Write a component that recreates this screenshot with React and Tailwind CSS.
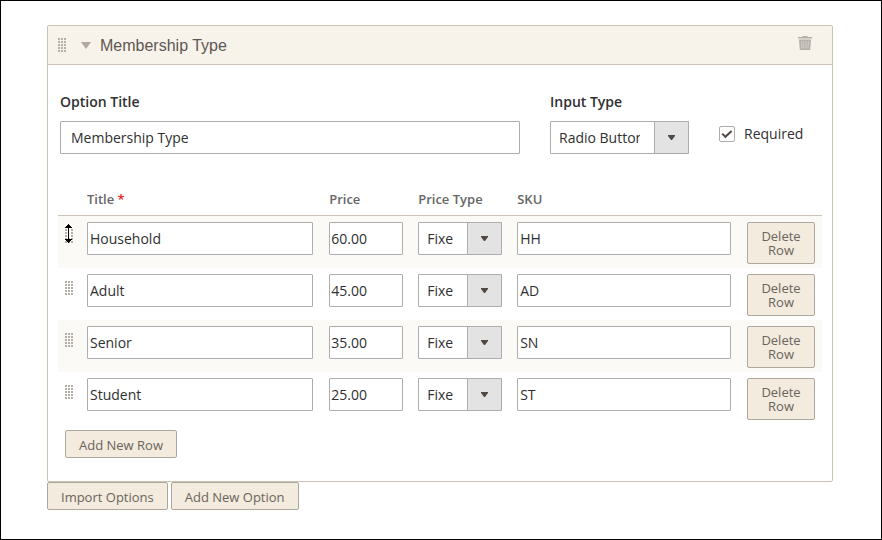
import React from "react";

const rows = [
  { title: "Household", price: "60.00", sku: "HH" },
  { title: "Adult", price: "45.00", sku: "AD" },
  { title: "Senior", price: "35.00", sku: "SN" },
  { title: "Student", price: "25.00", sku: "ST" },
];

const buttonClass =
  "rounded-[2px] border border-[#ada89e] bg-[#f2ebde] text-[13px] text-[#6b645c]";
const actionClass = "h-7 px-[13px] pt-px leading-6";
const inputClass =
  "block h-[33px] w-full rounded-[1px] border border-[#adadad] bg-white text-sm text-[#303030]";

function DragHandle() {
  return (
    <svg
      width="8"
      height="14"
      viewBox="0 0 8 14"
      className="block shrink-0"
      shapeRendering="crispEdges"
      fill="#b4afa9"
      aria-hidden="true"
    >
      {[0, 3, 6, 9, 12].map((y) =>
        [0, 3, 6].map((x) => (
          <rect key={`${x}-${y}`} x={x} y={y} width="2" height="2" />
        ))
      )}
    </svg>
  );
}

function MoveCursor() {
  return (
    <svg
      width="9"
      height="20"
      viewBox="0 0 9 20"
      className="absolute top-px left-1.5"
      shapeRendering="crispEdges"
      aria-hidden="true"
    >
      <path d="M3 5h3v10h-3z" fill="#fff" />
      <path
        d="M4 1h1v1h1v1h1v1h1v1H5v11h3v1H7v1H6v1H5v1H4v-1H3v-1H2v-1H1v-1h3V5H1V4h1V3h1V2h1z"
        fill="#000"
      />
    </svg>
  );
}

function Select({ id, label, option }) {
  return (
    <div className="relative">
      <select
        id={id}
        aria-label={label}
        className="block h-[33px] w-full appearance-none rounded-[1px] border border-[#adadad] bg-white pr-12 pl-2 text-sm text-[#303030]"
      >
        <option>{option}</option>
      </select>
      <span className="pointer-events-none absolute inset-y-0 right-0 flex w-[35px] items-center justify-center rounded-r-[1px] border border-[#adadad] bg-[#e3e3e3]">
        <svg width="7" height="5" viewBox="0 0 7 5" aria-hidden="true">
          <path d="M0 0h7v1L4 5H3L0 1z" fill="#514943" />
        </svg>
      </span>
    </div>
  );
}

function TrashIcon() {
  return (
    <svg width="14" height="14" viewBox="0 0 14 14" aria-hidden="true">
      <path d="M0 1h4.5V0h5v1H14v1.6H0z" fill="#b4afa9" />
      <path d="M1 3.4h12L12.2 14H1.8z" fill="#b4afa9" />
      <path
        d="M3.6 5l.4 7.6M5.9 5v7.6M8.1 5v7.6M10.4 5l-.4 7.6"
        stroke="#ded9d1"
        strokeWidth="0.8"
      />
    </svg>
  );
}

export default function App() {
  return (
    <main className="min-h-screen border border-black bg-white pt-6 pr-12 pb-7 pl-[46px] font-['Open_Sans','Noto_Sans',sans-serif] text-[#303030]">
      <section className="rounded-[2px] border border-[#cac3b4]">
        <header className="flex h-[39px] items-center border-b border-[#cac3b4] bg-[#f7f3eb] pr-5 pl-[10px]">
          <DragHandle />
          <svg
            width="10"
            height="7"
            viewBox="0 0 10 7"
            className="mr-[9px] ml-[15px]"
            aria-hidden="true"
          >
            <path d="M0 0h10L5 7z" fill="#b1a9a1" />
          </svg>
          <h2 className="flex-1 pt-0.5 font-['Liberation_Sans',Arial,sans-serif] text-base text-[#5e5752]">
            Membership Type
          </h2>
          <button type="button" aria-label="Delete option" className="pb-1">
            <TrashIcon />
          </button>
        </header>

        <div className="flex gap-[30px] px-3 pt-[27px]">
          <div className="flex-1">
            <label
              htmlFor="option-title"
              className="mb-[9px] block text-sm leading-5 font-semibold"
            >
              Option Title
            </label>
            <input
              id="option-title"
              type="text"
              defaultValue="Membership Type"
              className={`${inputClass} px-[10px]`}
            />
          </div>
          <div className="w-[139px]">
            <label
              htmlFor="input-type"
              className="mb-[9px] block text-sm leading-5 font-semibold"
            >
              Input Type
            </label>
            <Select id="input-type" option="Radio Buttons" />
          </div>
          <div className="flex w-[101px] items-center gap-[9px] pt-[21px]">
            <span className="relative">
              <input
                id="required"
                type="checkbox"
                defaultChecked
                className="peer block size-4 appearance-none rounded-[2px] border border-[#adadad] bg-white"
              />
              <svg
                viewBox="0 0 16 16"
                className="pointer-events-none absolute inset-0 hidden size-4 peer-checked:block"
                aria-hidden="true"
              >
                <path
                  d="M3.2 7.6l3.2 3.2 6.2-5.8"
                  fill="none"
                  stroke="#514943"
                  strokeWidth="2"
                />
              </svg>
            </span>
            <label htmlFor="required" className="text-sm">
              Required
            </label>
          </div>
        </div>

        <div className="px-[10px] pt-7 pb-[23px]">
          <table className="w-full table-fixed border-separate border-spacing-0">
            <colgroup>
              <col className="w-[29px]" />
              <col className="w-[31.7%]" />
              <col className="w-[89px]" />
              <col className="w-[99px]" />
              <col />
              <col className="w-[75px]" />
            </colgroup>
            <thead>
              <tr className="h-[34px] text-left text-[13px] text-[#666] [&>th]:border-b [&>th]:border-[#cac3b4] [&>th]:pt-0.5 [&>th]:font-semibold">
                <th aria-label="Sort" />
                <th>
                  Title <span className="text-[#e22626]">*</span>
                </th>
                <th>Price</th>
                <th>Price Type</th>
                <th>SKU</th>
                <th aria-label="Actions" />
              </tr>
            </thead>
            <tbody>
              {rows.map((row, i) => (
                <tr
                  key={row.sku}
                  className="odd:bg-[#fbfaf6] [&>td]:pt-1.5 [&>td]:pb-1 [&>td]:align-top"
                >
                  <td>
                    <div className="relative flex pt-[7px] pl-[7px]">
                      <DragHandle />
                      {i === 0 && <MoveCursor />}
                    </div>
                  </td>
                  <td className="pr-4">
                    <input
                      type="text"
                      aria-label={`Title ${i + 1}`}
                      defaultValue={row.title}
                      className={`${inputClass} px-0.5`}
                    />
                  </td>
                  <td className="pr-[15px]">
                    <input
                      type="text"
                      aria-label={`Price ${i + 1}`}
                      defaultValue={row.price}
                      className={`${inputClass} px-px`}
                    />
                  </td>
                  <td className="pr-[15px]">
                    <Select
                      id={`price-type-${i}`}
                      label={`Price type ${i + 1}`}
                      option="Fixed"
                    />
                  </td>
                  <td className="pr-4">
                    <input
                      type="text"
                      aria-label={`SKU ${i + 1}`}
                      defaultValue={row.sku}
                      className={`${inputClass} px-0.5`}
                    />
                  </td>
                  <td className="pr-[7px]">
                    <button
                      type="button"
                      className={`${buttonClass} block h-[42px] w-full px-3 leading-[14px]`}
                    >
                      Delete Row
                    </button>
                  </td>
                </tr>
              ))}
            </tbody>
          </table>
          <button
            type="button"
            className={`${buttonClass} ${actionClass} mt-1.5 ml-[7px] block`}
          >
            Add New Row
          </button>
        </div>
      </section>

      <div className="flex gap-[3px]">
        <button type="button" className={`${buttonClass} ${actionClass}`}>
          Import Options
        </button>
        <button type="button" className={`${buttonClass} ${actionClass}`}>
          Add New Option
        </button>
      </div>
    </main>
  );
}
